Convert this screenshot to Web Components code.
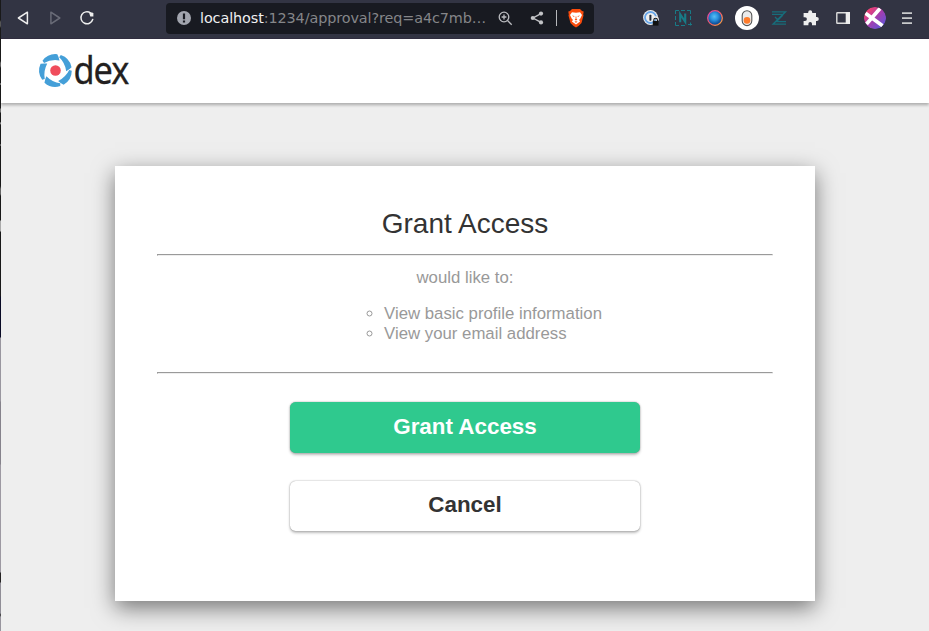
<!DOCTYPE html>
<html lang="en">
<head>
<meta charset="utf-8">
<title>dex</title>
<style>
html,body{margin:0;height:100%;overflow:hidden}
body{font-family:"Liberation Sans",Arial,sans-serif;color:#333}
</style>
</head>
<body>
<approval-window></approval-window>
<script>
function define(name, html) {
  const template = document.createElement('template');
  template.innerHTML = html;
  customElements.define(name, class extends HTMLElement {
    constructor() {
      super();
      this.attachShadow({ mode: 'open' }).append(template.content.cloneNode(true));
    }
  });
}

define('address-bar', `
<style>
:host{display:flex;align-items:center;box-sizing:border-box;width:428px;height:31px;background:#181a21;border-radius:4px;padding-left:11px;font:14.4px/20px "DejaVu Sans",sans-serif;letter-spacing:-.1px;color:#858689}
.info{width:14px;height:14px;margin-right:9px;flex:none}
.url{width:287px;white-space:nowrap;flex:none}
b{font-weight:400;color:#f0f0f1}
svg{display:block;flex:none}
.zoom{margin-left:11px}.share{margin-left:17px}
.line{width:1px;height:16px;background:#b6b7bb;margin-left:12px}
.shield{margin-left:10px}
</style>
<svg class="info" viewBox="0 0 14 14"><circle cx="7" cy="7" r="7" fill="#a2a5ae"/><path d="M5.9 2.6h2.2v5.6H5.9zM5.9 9.4h2.2v2H5.9z" fill="#181a21"/></svg>
<span class="url"><b>localhost</b>:1234/approval?req=a4c7mb…</span>
<svg class="zoom" width="15" height="15" viewBox="0 0 15 15" fill="none" stroke="#bbbcc0" stroke-width="1.3"><circle cx="6" cy="6" r="4.8"/><path d="M9.5 9.5l4.2 4.2M6 3.6v4.8M3.6 6h4.8"/></svg>
<svg class="share" width="14" height="14" viewBox="0 0 14 14"><path d="M11 2.6L3 7l8 4.4" fill="none" stroke="#c2c3c6" stroke-width="1.4"/><g fill="#c2c3c6"><circle cx="11" cy="2.6" r="2.1"/><circle cx="2.8" cy="7" r="2.1"/><circle cx="11" cy="11.4" r="2.1"/></g></svg>
<span class="line"></span>
<svg class="shield" width="18" height="20" viewBox="0 0 18 20"><path d="M5 1h8l2 2 1.7.5-.5 3 .3 1-2 7.5Q12 18 9 19.4 6 18 3.5 15l-2-7.5.3-1-.5-3L3 3z" fill="#fb4b0b"/><path d="M5 4.2l4 .6 4-.6 2 2.8-2.1 4.2-1 .6 1.2 1.8L9 16.4l-4.1-2.8 1.2-1.8-1-.6L3 7z" fill="#fff"/><path d="M4.9 7.4l2.5.6-.3 1zM13.1 7.4l-2.5.6.3 1zM8.6 8.4h.8v2.4l1 .9L9 12.4l-1.4-.7 1-.9zM7.4 13.8l1.6-.6 1.6.6-1.6 1z" fill="#fb4b0b"/></svg>
`);

define('browser-bar', `
<style>
:host{display:flex;align-items:center;box-sizing:border-box;height:39px;background:#323443;border-bottom:1px solid #302d3f;padding:0 10px 2px 14px}
svg{display:block;flex:none}
.nav{display:flex;width:151px;gap:16px}
.extensions{display:flex;align-items:center;gap:8px;margin-left:auto}
</style>
<div class="nav">
<svg width="16" height="16" viewBox="0 0 16 16" fill="none" stroke="#eee" stroke-width="1.5" stroke-linejoin="round"><path d="M12.4 2.2v11.6L3.4 8z"/></svg>
<svg width="16" height="16" viewBox="0 0 16 16" fill="none" stroke="#696b77" stroke-width="1.5" stroke-linejoin="round"><path d="M3.9 2.2v11.6L12.8 8z"/></svg>
<svg width="16" height="16" viewBox="0 0 16 16"><path d="M11.6 3A6 6 0 1 0 13.7 9.5" fill="none" stroke="#eee" stroke-width="1.5" stroke-linecap="round"/><path d="M10 2.5h3.4l1 1v3h-3.1z" fill="#eee"/></svg>
</div>
<address-bar></address-bar>
<div class="extensions">
<svg width="24" height="24" viewBox="0 0 24 24"><circle cx="11.5" cy="11.5" r="7.4" fill="#eee"/><circle cx="11.5" cy="11.5" r="5.5" fill="none" stroke="#67a5e8" stroke-width="1.8"/><rect x="10.4" y="8.7" width="2" height="6" rx=".7" fill="#222b3a"/><path d="M14.6 14.5v-1a2 2 0 0 1 4 0v1" fill="none" stroke="#eee" stroke-width="2.5"/><path d="M14.8 15v-1a1.8 1.8 0 0 1 3.6 0v1" fill="none" stroke="#111" stroke-width="1.1"/><rect x="13.8" y="15" width="5.7" height="4.6" fill="#111"/></svg>
<svg width="24" height="24" viewBox="0 0 24 24" fill="none" stroke="#187b87"><path d="M4.5 8V4.5H8M10 4.5h4M16 4.5h3.5V8M4.5 10v4M4.5 16v3.5H8M10 19.5h4M19.5 10v4M19.5 16.5v3M17 18.5h4"/><path d="M9.2 16.3V8.2l5 7.6V7.4" stroke-width="2.1"/></svg>
<svg width="24" height="24" viewBox="0 0 24 24"><defs><radialGradient id="g" cx=".45" cy=".4"><stop stop-color="#58bef2"/><stop offset=".5" stop-color="#2b93e0"/><stop offset="1" stop-color="#115299"/></radialGradient><linearGradient id="r" x1="0" y1="0" x2="1" y2="1"><stop stop-color="#db43b0"/><stop offset=".55" stop-color="#f35f64"/><stop offset="1" stop-color="#ffad35"/></linearGradient></defs><circle cx="12" cy="12" r="7.3" fill="url(#g)" stroke="url(#r)" stroke-width="1.3"/></svg>
<svg width="24" height="24" viewBox="0 0 24 24"><circle cx="12" cy="12" r="12" fill="#fff"/><rect x="7.2" y="4.8" width="9.6" height="14.8" rx="4.8" fill="#eaeaea" stroke="#555" stroke-width="1.1"/><circle cx="12" cy="14.4" r="3.3" fill="#ff7c2b"/></svg>
<svg width="24" height="24" viewBox="0 0 24 24" fill="none" stroke="#176d7b" stroke-width="1.3"><path d="M5 5.8h13.5L6 18.2h13M5 8.4h11M8 15.7h11M8 11l3 3 5-5"/></svg>
<svg width="24" height="24" viewBox="0 0 24 24"><path d="M5 7h4.2V6.2a2 2 0 0 1 4 0V7H17v4h.8a2 2 0 0 1 0 4H17v4.2h-4v-1.4a1.8 1.8 0 0 0-3.6 0v1.4H4.6V15H6a1.8 1.8 0 0 0 0-3.8H4.6V7z" fill="#eee"/></svg>
<svg width="24" height="24" viewBox="0 0 24 24"><rect x="5.8" y="6.7" width="12.4" height="10.6" rx=".6" fill="none" stroke="#ddd" stroke-width="1.4"/><path d="M14.7 6h4.3v12h-4.3z" fill="#eee"/></svg>
<svg width="24" height="24" viewBox="0 0 24 24"><defs><linearGradient id="p" x1="0" y1="0" x2="1" y2="1"><stop offset=".1" stop-color="#ff4269"/><stop offset=".5" stop-color="#a63dad"/><stop offset="1" stop-color="#4c5be5"/></linearGradient><clipPath id="c"><circle cx="12" cy="12" r="11"/></clipPath></defs><g clip-path="url(#c)"><circle cx="12" cy="12" r="11" fill="url(#p)"/><path d="M2.5 7.2l17 12.6M17 2.5L3.5 18" stroke="#fff" stroke-width="3.6" fill="none"/></g></svg>
<svg width="24" height="24" viewBox="0 0 24 24" stroke="#c9cacc" stroke-width="1.7"><path d="M7 7.2h10M7 12.2h10M7 17.2h10"/></svg>
</div>
`);

define('dex-logo', `
<style>
:host{display:block;width:120px;height:64px}
svg{display:block;overflow:visible}
text{font-family:"Noto Sans","Open Sans",sans-serif;font-size:37.5px;letter-spacing:-1.2px;fill:#231f20;stroke:#231f20;stroke-width:.3px}
</style>
<svg width="120" height="64" viewBox="0 0 120 64">
<g transform="translate(18.5 31.5)" fill="#449fd8">
<path id="blade" d="M-13 -9.8A16.3 16.3 0 0 1 1.8 -16.3Q3.3 -13.5 4 -10Q-4.5 -11.4 -11.4 -7.6Z"/>
<use href="#blade" transform="rotate(72)"/><use href="#blade" transform="rotate(144)"/><use href="#blade" transform="rotate(216)"/><use href="#blade" transform="rotate(288)"/>
<circle r="5.3" fill="#f04d5c"/>
</g>
<text transform="translate(36.6 45.3) scale(.915 1)">dex</text>
</svg>
`);

define('site-header', `
<style>
:host{display:flex;align-items:center;box-sizing:border-box;height:64px;padding-left:36px;background:#fff;box-shadow:0 2.8px 2.8px rgba(0,0,0,.27);position:relative}
</style><slot></slot>`);

define('approval-card', `
<style>
:host{display:block;box-sizing:border-box;width:700px;height:435px;padding:42px;background:#fff;box-shadow:0 7px 21px rgba(0,0,0,.5);font-size:16.8px;line-height:20px;color:#999;text-align:center}
h2{font-size:28px;line-height:32px;font-weight:400;color:#333;margin:0 0 14px}
hr{margin:0;border:1px solid;border-color:#9a9a9a #eee #eee #9a9a9a}
p{margin:12px 0 16px}
.scopes{display:flex;justify-content:center;padding-left:56px;height:68px}
ul{list-style:circle;text-align:left;margin:0;padding:0}
.actions{display:flex;flex-direction:column;align-items:center;gap:28px;margin-top:28px}
</style>
<h2>Grant Access</h2><hr>
<p>would like to:</p>
<div class="scopes"><ul><li>View basic profile information</li><li>View your email address</li></ul></div>
<hr>
<div class="actions"><theme-button primary>Grant Access</theme-button><theme-button>Cancel</theme-button></div>
`);

define('theme-button', `
<style>
:host{display:block}
button{display:block;box-sizing:border-box;width:350px;height:50px;border:0;border-radius:5.6px;padding:0 0 3px;background:#fff;color:#333;font:700 22.4px "Liberation Sans",Arial,sans-serif;box-shadow:0 1.4px 2.8px rgba(0,0,0,.25),0 0 1.4px rgba(0,0,0,.4)}
:host([primary]) button{height:51px;padding-bottom:2px;background:#2fc98e;color:#fff}
</style><button><slot></slot></button>`);

define('approval-window', `
<style>
:host{display:grid;grid-template-columns:1px 1fr;width:929px;height:631px}
.edge{background:linear-gradient(#191919 0 20px,#555 22px 26px,#191919 28px 61px,#666 63px 66px,#181818 68px 83px,#bbb 84px,#181818 85px 108px,#777 109px 112px,#181818 113px 122px,#aaa 123px,#181818 125px 144px,#999 145px,#181818 146px 186px,#666 189px 194px,#181818 196px 220px,#aaa 221px 231px,#181818 232px 296px,#090a25 297px 337px,#99969f 338px 401px,#85828b 402px 464px,#9d99a2 465px 572px,#252323 573px 582px,#908e97 583px 613px,#333 615px,#98959e 617px)}
.page{display:flex;flex-direction:column;background:#eee;min-width:0;overflow:hidden}
main{padding:63px 0 30px 114px}
</style>
<div class="edge"></div>
<div class="page"><browser-bar></browser-bar><site-header><dex-logo></dex-logo></site-header><main><approval-card></approval-card></main></div>
`);
</script>
</body>
</html>
